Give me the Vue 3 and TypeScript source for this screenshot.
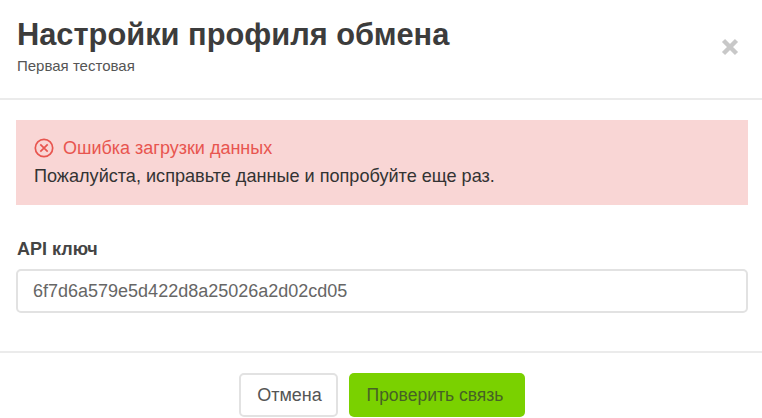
<template>
  <div class="modal">
    <header class="modal-header">
      <div class="titles">
        <h1>Настройки профиля обмена</h1>
        <p>Первая тестовая</p>
      </div>
      <button class="close" type="button" aria-label="Закрыть">
        <svg width="18" height="18" viewBox="0 0 18 18">
          <path d="M2.5 2.5 15.5 15.5M15.5 2.5 2.5 15.5" stroke="#c8c8c8" stroke-width="4.4" fill="none" />
        </svg>
      </button>
    </header>

    <section class="modal-body">
      <div class="alert">
        <div class="alert-title">
          <svg width="20" height="20" viewBox="0 0 20 20" fill="none" stroke="#e8554f">
            <circle cx="10" cy="10" r="8.7" stroke-width="1.7" />
            <path d="M6.3 6.3 13.7 13.7M13.7 6.3 6.3 13.7" stroke-width="1.7" />
          </svg>
          <span>{{ errorTitle }}</span>
        </div>
        <div class="alert-text">{{ errorText }}</div>
      </div>

      <label class="field-label" for="api-key">API ключ</label>
      <input id="api-key" v-model="apiKey" class="field-input" type="text" />
    </section>

    <footer class="modal-footer">
      <button class="btn btn-cancel" type="button">Отмена</button>
      <button class="btn btn-check" type="button">Проверить связь</button>
    </footer>
  </div>
</template>

<script setup lang="ts">
import { ref } from 'vue';

const errorTitle = 'Ошибка загрузки данных';
const errorText = 'Пожалуйста, исправьте данные и попробуйте еще раз.';
const apiKey = ref('6f7d6a579e5d422d8a25026a2d02cd05');
</script>

<style scoped>
.modal {
  width: 762px;
  height: 418px;
  background: #fff;
  font-family: "Liberation Sans", Arial, sans-serif;
  color: #333;
  overflow: hidden;
}

.modal-header {
  height: 100px;
  box-sizing: border-box;
  border-bottom: 2px solid #ebebeb;
  padding: 17px 23px 0 17px;
  display: flex;
  justify-content: space-between;
}

h1 {
  margin: 0;
  font-size: 30.8px;
  line-height: 36px;
  font-weight: 700;
  color: #3c3c3c;
}

.titles p {
  margin: 4px 0 0;
  font-size: 15px;
  line-height: 18px;
  color: #555;
}

.close {
  border: 0;
  padding: 0;
  background: none;
  height: 18px;
  margin-top: 21px;
}

.modal-body {
  height: 253px;
  box-sizing: border-box;
  padding: 20px 14px 0 16px;
  border-bottom: 2px solid #ebebeb;
}

.alert {
  height: 85px;
  box-sizing: border-box;
  background: #f9d6d5;
  padding: 18px 18px 0;
}

.alert-title {
  display: flex;
  align-items: center;
  gap: 9px;
  height: 20px;
  font-size: 18px;
  color: #e8554f;
}

.alert-text {
  margin-top: 8px;
  font-size: 18.1px;
  line-height: 20px;
  color: #333;
}

.field-label {
  display: block;
  margin-top: 34px;
  padding-left: 1px;
  font-size: 18px;
  line-height: 20px;
  font-weight: 700;
  color: #444;
}

.field-input {
  display: block;
  width: 100%;
  height: 44px;
  box-sizing: border-box;
  margin-top: 10px;
  padding: 0 15px;
  border: 2px solid #e2e2e2;
  border-radius: 5px;
  background: #fff;
  font-family: inherit;
  font-size: 18px;
  color: #666;
  outline: none;
}

.modal-footer {
  display: flex;
  justify-content: center;
  gap: 11px;
  padding: 20px 0 0 2px;
}

.btn {
  height: 44px;
  box-sizing: border-box;
  border-radius: 5px;
  font-family: inherit;
  font-size: 18px;
  padding: 0;
}

.btn-cancel {
  width: 99px;
  padding-left: 2px;
  background: #fff;
  border: 2px solid #e2e2e2;
  color: #555;
}

.btn-check {
  width: 176px;
  padding-right: 4px;
  background: #7ad100;
  border: 0;
  font-size: 17.5px;
  color: #466225;
}
</style>

<style>
html,
body {
  margin: 0;
  background: #fff;
}
</style>
